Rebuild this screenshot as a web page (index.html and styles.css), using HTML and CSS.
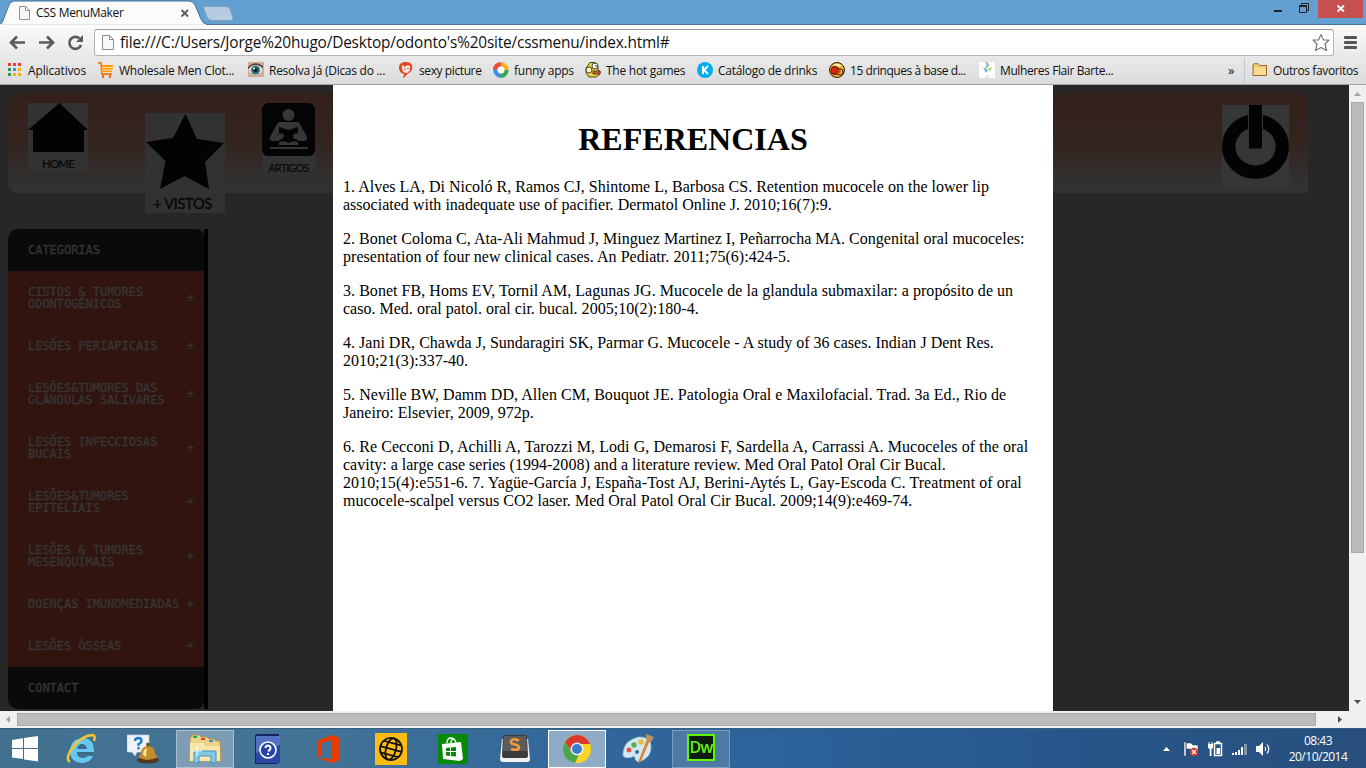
FILE: index.html
```html
<!DOCTYPE html>
<html lang="pt-BR">
<head>
<meta charset="utf-8">
<title>CSS MenuMaker</title>
<link rel="stylesheet" href="styles.css">
</head>
<body>
<div class="screen">
  <div class="titlebar">
    <svg class="tabs" width="240" height="25" viewBox="0 0 240 25">
      <path d="M0 24.500C3 23 3 20 5 15L9 5Q10.500 1 14 1H189Q193 1 195 5L201 19Q203 24 207 24.500V25H0Z" fill="#fbfbfb" stroke="#456f97"/>
      <path d="M0 25V24.300H206V25Z" fill="#fbfbfb"/>
      <path d="M204 6.500H225Q229 6.500 230 9L233 18Q234 20.500 231 20.500H212Q208 20.500 207 17L203.500 8Q203 6.500 204 6.500Z" fill="#b6cce0" stroke="#7f9fba"/>
      <path d="M19.500 6.500H26L29.500 10V19.500H19.500ZM25.500 6.500V10.500H29.500" fill="#f7f7f7" stroke="#929292"/>
      <path d="M181.500 10L188 16.500M188 10L181.500 16.500" stroke="#5b5b5b" stroke-width="1.800"/>
    </svg>
    <span class="tab-title">CSS MenuMaker</span>
    <svg class="wincontrols" width="96" height="19" viewBox="0 0 96 19">
      <rect x="4" y="11" width="8" height="2" fill="#222"/>
      <path d="M29.500 6.500H36.500V13.500H29.500ZM29 7.500H37M31.500 6V4.500H38.500V11.500H37" fill="none" stroke="#222"/>
      <rect x="48" width="45" height="19" fill="#c75050"/>
      <path d="M67.500 6.500L74 12.500M74 6.500L67.500 12.500" stroke="#fff" stroke-width="1.900"/>
    </svg>
  </div>

  <div class="toolbar">
    <svg class="nav" width="94" height="33" viewBox="0 0 94 33" fill="none" stroke="#5a5a5a" stroke-width="2.600">
      <path d="M25 17.500H12M17 11.500L11 17.500L17 23.500"/>
      <path d="M39 17.500H52M47 11.500L53 17.500L47 23.500"/>
      <path d="M79.500 13.500A6 6 0 1 0 81 20"/><path d="M83 10V17H76Z" fill="#5a5a5a" stroke="none"/>
    </svg>
    <div class="omnibox">
      <svg width="14" height="17" viewBox="0 0 14 17"><path d="M1.500 1.500H8.500L12.500 5.500V15.500H1.500ZM8.500 1.500V5.500H12.500" fill="#f8f8f8" stroke="#8c8c8c"/></svg>
      <span class="url">file:///C:/Users/Jorge%20hugo/Desktop/odonto's%20site/cssmenu/index.html#</span>
      <svg width="20" height="20" viewBox="0 0 20 20"><path d="M10 1.500L12.500 7H18L14 11L15.500 17.500L10 14.500L4.500 17.500L6 11L2 7H7.500Z" fill="#fff" stroke="#777" stroke-width="1.200" stroke-linejoin="round"/></svg>
    </div>
    <div class="burger"><i></i><i></i><i></i></div>
  </div>

  <div class="bookmarks">
    <div class="bm b0"><svg width="14" height="14" viewBox="0 0 14 14"><g fill="#e33d35"><path d="M0 0h3v3H0zM5 0h3v3H5zM10 0h3v3h-3z"/></g><path d="M0 5h3v3H0zM0 10h3v3H0z" fill="#2b9a58"/><path d="M5 5h3v3H5z" fill="#4587ed"/><path d="M10 5h3v3h-3zM5 10h3v3H5zM10 10h3v3h-3z" fill="#f5b400"/></svg><span>Aplicativos</span></div>
    <div class="bm b1"><svg width="16" height="16" viewBox="0 0 16 16"><path d="M0 1H3L4 12H14" fill="none" stroke="#f58220" stroke-width="1.800"/><path d="M4 3H15L14 10H4Z" fill="#f90"/><path d="M4 5.500H15M4 8H14" stroke="#ffe0a0"/><path d="M4 13H6V16H4ZM11 13H13V16H11Z" fill="#f26a10"/></svg><span>Wholesale Men Clot...</span></div>
    <div class="bm b2"><svg width="16" height="16" viewBox="0 0 16 16"><rect width="16" height="15" fill="#cfac94"/><path d="M0 5Q7-2 15 4V6Q8 0 0 7Z" fill="#543c30"/><ellipse cx="7.500" cy="8" rx="6.500" ry="5" fill="#dce7e6"/><circle cx="7.500" cy="8" r="4.500" fill="#34737b"/><circle cx="7.500" cy="8" r="2.300" fill="#10262b"/><circle cx="6" cy="6.500" r="1" fill="#fff"/></svg><span>Resolva Já (Dicas do ...</span></div>
    <div class="bm b3"><svg width="14" height="16" viewBox="0 0 14 16"><path d="M7 0C12 0 14 3 13 7C12 11 8 11 6 15L4 16L5 12C1 11 0 8 0 5C0 2 3 0 7 0Z" fill="#e34720"/><path d="M3 3L6 5Q8 2 11 4Q12 9 8 11Q3 11 3 6Z" fill="#f9e8e2"/><circle cx="6" cy="7" r=".8" fill="#d34424"/><circle cx="9" cy="6.500" r=".8" fill="#d34424"/></svg><span>sexy picture</span></div>
    <div class="bm b4"><svg width="16" height="16" viewBox="0 0 16 16" fill="none" stroke-width="4.500"><path d="M2 8A5.500 5.500 0 0 1 8 2.500" stroke="#e64d3d"/><path d="M8 2.500A5.500 5.500 0 0 1 13.500 8" stroke="#f2b31c"/><path d="M13.500 8A5.500 5.500 0 0 1 7 13.500" stroke="#36a853"/><path d="M7.500 13.500A5.500 5.500 0 0 1 2.500 7.500" stroke="#4788e8"/><circle cx="8" cy="8" r="3.500" fill="#fff"/></svg><span>funny apps</span></div>
    <div class="bm b5"><svg width="16" height="16" viewBox="0 0 16 16"><path d="M5 .5H10L13 4V8L15 9V12L11 15H4L1 11V6Z" fill="#e9d438" stroke="#4d452f"/><circle cx="4" cy="8" r="3" fill="#fbf4bd" stroke="#4d452f"/><circle cx="10" cy="4" r="3" fill="#fff" stroke="#4d452f"/><path d="M8 9H15V12H8Z" fill="#dc5037" stroke="#4d452f"/><path d="M11 3v2" stroke="#222"/></svg><span>The hot games</span></div>
    <div class="bm b6"><svg width="16" height="16" viewBox="0 0 16 16"><circle cx="8" cy="8" r="8" fill="#00aeef"/><path d="M6 4V12M11 4L7 8L11 12" stroke="#fff" stroke-width="2" fill="none"/></svg><span>Catálogo de drinks</span></div>
    <div class="bm b7"><svg width="16" height="16" viewBox="0 0 16 16"><circle cx="8" cy="8" r="7.500" fill="#f2ad20" stroke="#30200f"/><path d="M4 3Q9 0 13 4L9 5Z" fill="#fff3ab"/><circle cx="6" cy="8.500" r="4" fill="#df2415" stroke="#501008"/><circle cx="11" cy="10" r="3" fill="#f5c32c" stroke="#30200f"/><path d="M9 9l2-1 1 2-2 2z" fill="#e02818"/></svg><span>15 drinques à base d...</span></div>
    <div class="bm b8"><svg width="16" height="16" viewBox="0 0 16 16"><rect width="16" height="16" fill="#fff"/><path d="M7 0L9 3L7 6" stroke="#8bb7af" stroke-width="2" fill="none"/><path d="M4 5L9 8L7 11Z" fill="#64b6ca"/><path d="M9 7L13 5L11 9Z" fill="#a6bd3e"/><path d="M7 13h3v3H6z" fill="#f9e3e5"/></svg><span>Mulheres Flair Barte...</span></div>
    <div class="more">»</div>
    <div class="bm others"><svg width="16" height="14" viewBox="0 0 16 14"><path d="M1 12V2L2 .7H6L7.500 2.500H14.500V12.500H1Z" fill="#f4c96f" stroke="#9a6a33"/><path d="M2 4.500H14V12H2Z" fill="#fbd98e"/></svg><span>Outros favoritos</span></div>
  </div>

  <div class="browser">
    <div class="page">
      <div class="left">
        <div class="banner">
          <div class="pic home"><svg width="60" height="68" viewBox="0 0 60 68"><path d="M31.500 0L60 27H56V49H5V27H0Z" fill="#030303"/></svg><b>HOME</b></div>
          <div class="pic star"><svg width="80" height="100" viewBox="0 0 80 100"><path d="M40.500 1L52 26L79 30L60 49L64 76L39.500 63L15 76L20.500 48L1 29L28 25Z" fill="#030303"/></svg><b>+ VISTOS</b></div>
          <div class="pic artigos"><svg width="53" height="69" viewBox="0 0 53 69"><rect width="53" height="53" rx="6" fill="#040404"/><g fill="#363636"><circle cx="26.500" cy="12" r="6"/><path d="M18 19H35Q37 19 38 21L45 34Q46 38 42 38H36V42H17V38H11Q7 38 8 34L15 21Q16 19 18 19Z"/><path d="M8 44H46V46H8Z"/></g><path d="M17 24L26.500 27L36 24V30Q31 30 31 33Q31 36 36 37V39Q31 37 26.500 40Q22 37 17 39V37Q22 36 22 33Q22 30 17 30Z" fill="#040404"/><path d="M15 31.500h4" stroke="#28113a"/></svg><b>ARTIGOS</b></div>
        </div>
        <ul class="menu">
          <li class="dark">CATEGORIAS</li>
          <li class="tall"><span>CISTOS &amp; TUMORES<br>ODONTOGÊNICOS</span><i>+</i></li>
          <li><span>LESÕES PERIAPICAIS</span><i>+</i></li>
          <li class="tall"><span>LESÕES&amp;TUMORES DAS<br>GLÂNDULAS SALIVARES</span><i>+</i></li>
          <li class="tall"><span>LESÕES INFECCIOSAS<br>BUCAIS</span><i>+</i></li>
          <li class="tall"><span>LESÕES&amp;TUMORES<br>EPITELIAIS</span><i>+</i></li>
          <li class="tall"><span>LESÕES &amp; TUMORES<br>MESENQUIMAIS</span><i>+</i></li>
          <li><span>DOENÇAS IMUNOMEDIADAS</span><i>+</i></li>
          <li><span>LESÕES ÓSSEAS</span><i>+</i></li>
          <li class="dark last">CONTACT</li>
        </ul>
      </div>
      <div class="modal">
        <h1>REFERENCIAS</h1>
        <p>1. Alves LA, Di Nicoló R, Ramos CJ, Shintome L, Barbosa CS. Retention mucocele on the lower lip<br>associated with inadequate use of pacifier. Dermatol Online J. 2010;16(7):9.</p>
        <p>2. Bonet Coloma C, Ata-Ali Mahmud J, Minguez Martinez I, Peñarrocha MA. Congenital oral mucoceles:<br><span class="loose">presentation of four new clinical cases. An Pediatr. 2011;75(6):424-5.</span></p>
        <p><span class="wide">3. Bonet FB, Homs EV, Tornil AM, Lagunas JG. Mucocele de la glandula submaxilar: a propósito de un</span><br>caso. Med. oral patol. oral cir. bucal. 2005;10(2):180-4.</p>
        <p>4. Jani DR, Chawda J, Sundaragiri SK, Parmar G. Mucocele - A study of 36 cases. Indian J Dent Res.<br>2010;21(3):337-40.</p>
        <p><span class="wide">5. Neville BW, Damm DD, Allen CM, Bouquot JE. Patologia Oral e Maxilofacial. Trad. 3a Ed., Rio de</span><br>Janeiro: Elsevier, 2009, 972p.</p>
        <p><span class="wider">6. Re Cecconi D, Achilli A, Tarozzi M, Lodi G, Demarosi F, Sardella A, Carrassi A. Mucoceles of the oral</span><br>cavity: a large case series (1994-2008) and a literature review. Med Oral Patol Oral Cir Bucal.<br><span class="wider">2010;15(4):e551-6. 7. Yagüe-García J, España-Tost AJ, Berini-Aytés L, Gay-Escoda C. Treatment of oral</span><br>mucocele-scalpel versus CO2 laser. Med Oral Patol Oral Cir Bucal. 2009;14(9):e469-74.</p>
      </div>
      <div class="right">
        <div class="banner end">
          <svg width="67" height="82" viewBox="0 0 67 82"><rect width="67" height="82" fill="#363636"/><ellipse cx="33.500" cy="41.500" rx="26.800" ry="25.700" fill="none" stroke="#030303" stroke-width="13.300"/><path d="M26 0H41V43H26Z" fill="#363636"/><path d="M27 0H40V43.500H27Z" fill="#030303"/><path d="M16 31.500h3" stroke="#28113a"/></svg>
        </div>
      </div>
    </div>
    <div class="vscroll"><svg width="17" height="17" viewBox="0 0 17 17"><path d="M5 11H12L8.500 7Z" fill="#a3a3a3"/></svg><div class="vthumb"></div><svg class="down" width="17" height="17" viewBox="0 0 17 17"><path d="M5 6H12L8.500 10Z" fill="#505050"/></svg></div>
  </div>
  <div class="hscroll"><svg width="17" height="17" viewBox="0 0 17 17"><path d="M10 5V12L6 8.500Z" fill="#a3a3a3"/></svg><div class="hthumb"></div><svg class="rt" width="17" height="17" viewBox="0 0 17 17"><path d="M6 5V12L10 8.500Z" fill="#505050"/></svg></div>

  <div class="taskbar">
    <div class="start"><svg width="27" height="26" viewBox="0 0 27 26" fill="#fff"><path d="M0 4L11 2.300V12H0ZM12 2L26 0V12H12ZM0 13H11V23L0 21.500ZM12 13H26V25.500L12 23.500Z"/></svg></div>
    <div class="task"><svg width="32" height="32" viewBox="0 0 32 32"><path d="M28 21H12Q13 25 18 25Q21 25 23 23H28Q25 30 17 30Q5 29 5 18Q6 6 17 5Q29 5 29 18V21Z" fill="#66c8f3"/><path d="M12 16H22Q21 11 17 11Q13 11 12 16ZM12 19H29V21H12Z" fill="#39698d"/><path d="M5 29C-3 25 13 3 27 2Q31 2 29 8" fill="none" stroke="#f4c62c" stroke-width="2.500"/></svg></div>
    <div class="task"><svg width="32" height="32" viewBox="0 0 32 32"><path d="M0 2H22V19H10L8 23L5 19H0Z" fill="#eef3f8" stroke="#c0ccd6" stroke-width=".7"/><path d="M8 8Q8 5 11.500 5Q14.500 5 14.500 8Q14.500 10 11.500 11V13M11.500 14V16.500" fill="none" stroke="#1c7cc9" stroke-width="2.300"/><ellipse cx="21" cy="27" rx="11" ry="3.500" fill="#51351c"/><path d="M11 24Q14 23 14 18Q16 13 21 13Q27 13 28 19Q28 23 31 24Q20 30 11 24Z" fill="#c58c2b"/><path d="M16 22Q16 16 20 15L19 24Z" fill="#ffe389"/><circle cx="21" cy="11.500" r="2" fill="#72502a"/></svg></div>
    <div class="task open"><svg width="34" height="32" viewBox="0 0 34 32"><path d="M2 6L4 2H11L13 4H19L21 6H26L28 8H32L33 28H1Z" fill="#ecd28b" stroke="#b7964b"/><path d="M2 10H15L18 13H32V28H2Z" fill="#f8e7a9"/><path d="M5 3h4v2H5z" fill="#26ac45"/><path d="M13 5h4v2h-4z" fill="#d3452d"/><path d="M21 7h4v2h-4z" fill="#378fcc"/><path d="M6 30V18H28V30H23V23H11V30Z" fill="#82c9e8" stroke="#4791bb"/><path d="M4 18H14M9 13V23" stroke="#fff"/></svg></div>
    <div class="task"><svg width="28" height="32" viewBox="0 0 28 32"><path d="M2 2L5 1H26V30L23 31H2Z" fill="#182266"/><path d="M3 3H27V30H3Z" fill="#2c46a4"/><path d="M3 3H27V12L3 20Z" fill="#5470c3"/><circle cx="15" cy="17" r="8" fill="#2444a6" stroke="#fff" stroke-width="1.600"/><path d="M12.500 15Q12.500 12.500 15 12.500Q17.500 13 17.500 15Q17.500 17 15 18M15 20V22" fill="none" stroke="#fff" stroke-width="2"/></svg></div>
    <div class="task"><svg width="24" height="30" viewBox="0 0 24 30"><path d="M0 7L15 1L23 4V26L15 29L0 24L15 25V6L5 9V21L0 24Z" fill="#eb3c00"/></svg></div>
    <div class="task"><svg width="32" height="32" viewBox="0 0 32 32"><rect width="32" height="32" fill="#fdbc13"/><g fill="none" stroke="#111" stroke-width="1.800" transform="rotate(15 16 16)"><circle cx="16" cy="16" r="11"/><ellipse cx="16" cy="16" rx="5" ry="11"/><path d="M5 16H27M7.500 10H24.500M7.500 22H24.500"/></g></svg></div>
    <div class="task"><svg width="30" height="30" viewBox="0 0 30 30"><rect width="30" height="30" fill="#078a07"/><path d="M4 10L23 8L25 25L22 27L5 25Z" fill="#fff"/><path d="M9 9Q9 4 13 4Q17 4 18 9M13 9Q13 5 16 5" fill="none" stroke="#fff" stroke-width="1.400"/><path d="M8 14L12 13.500V17H8ZM13 13.400L18 13V17H13ZM8 18H12V22L8 21.500ZM13 18H18V22.500L13 22Z" fill="#078a07"/></svg></div>
    <div class="task"><svg width="32" height="30" viewBox="0 0 32 30"><path d="M3 5H29L31 25Q31 28 28 28H4Q1 28 1 25Z" fill="#f0f0f0"/><path d="M6 1H26Q28 1 28 3L29 21Q29 24 27 24H5Q3 24 3 21L4 3Q4 1 6 1Z" fill="#3c3c3c"/><path d="M5 2H27L28 17H4Z" fill="#5c5c5c"/><path d="M20 6.500Q12 3.500 12 8Q12 10 16 10.500Q20 11 20 14Q19 17 12 15" fill="none" stroke="#f69a3e" stroke-width="2.500"/></svg></div>
    <div class="task active"><svg width="30" height="30" viewBox="0 0 30 30"><circle cx="15" cy="15" r="14" fill="#e8bd24"/><path d="M3 8Q9 0 18 1.300Q25 3 28 10H15L10 18Z" fill="#d93a2d"/><path d="M3 8L10 19L17 20L13 29Q2 27 1 16Q1 12 3 8Z" fill="#4aa64c"/><path d="M28 10Q31 18 25 25Q20 30 13 29L20 17V10Z" fill="#fbd526"/><circle cx="15" cy="15" r="6.500" fill="#f3f3f3"/><circle cx="15" cy="15" r="5" fill="#3a7dd0"/></svg></div>
    <div class="task"><svg width="34" height="32" viewBox="0 0 34 32"><path d="M2 16Q4 7 17 4Q29 4 29 14Q29 24 19 28Q14 30 13 25Q13 22 10 24Q2 26 1 22Q1 20 2 16Z" fill="#d2e9f3" stroke="#a0c2d4"/><circle cx="7" cy="17" r="2.500" fill="#d85747"/><circle cx="12" cy="12" r="2.700" fill="#5dac54"/><circle cx="19" cy="9" r="2.800" fill="#e9ba3f"/><circle cx="15" cy="19" r="2" fill="#326f9a"/><path d="M28 7L19 28L16 31L17 27L25 6Z" fill="#dc812f"/><path d="M24 1L32 4L29 9L24 6Z" fill="#bf9263"/></svg></div>
    <div class="task open2"><div class="dw">Dw</div></div>
    <svg class="tray" width="110" height="20" viewBox="0 0 110 20">
      <path d="M1 12H8L4.500 8Z" fill="#fff"/>
      <g stroke="#17334f" stroke-width=".5"><path d="M22 3H24V17H22ZM24 4H29L31 6H36V12H30L28 10H24Z" fill="#fff"/></g><circle cx="32" cy="13" r="4.300" fill="#da3426"/><path d="M30 11L34 15M34 11L30 15" stroke="#fff" stroke-width="1.400"/>
      <path d="M52.500 4.500H59.500V16.500H52.500ZM54 3H58" fill="none" stroke="#fff" stroke-width="1.500"/><path d="M54.500 9H58V15H54.500ZM46 5H51V9L49.500 10V17H47.700V10L46 9ZM46.500 3H47.500V6H46.500ZM49.500 3H50.500V6H49.500Z" fill="#fff"/>
      <path d="M70 14h2v2h-2zM73 13h2v3h-2zM76 11h2v5h-2zM79 8h2v8h-2z" fill="#fff"/><path d="M82 5h3v11h-3z" fill="#8194a8"/>
      <path d="M94 7H97L101 3V17L97 13H94Z" fill="#fff"/><path d="M103 8Q104.500 10 103 12M105 5.500Q108.500 10 105 14.500" fill="none" stroke="#fff" stroke-width="1.200"/>
    </svg>
    <div class="clock">08:43<br>20/10/2014</div>
  </div>
</div>
</body>
</html>
```
FILE: styles.css
```css
* { box-sizing: border-box; }
body { margin: 0; font-family: "Open Sans", "Noto Sans", sans-serif; }
svg { display: block; flex: none; }
.screen { width: 1366px; height: 768px; overflow: hidden; display: flex; flex-direction: column; background: #fff; }

/* Window frame */
.titlebar { height: 25px; flex: none; background: #61a0d0; border-bottom: 1px solid #4a7497; display: flex; position: relative; }
.tabs { height: 25px; margin-bottom: -1px; position: relative; z-index: 1; }
.tab-title { position: absolute; z-index: 2; left: 36px; top: 4px; font-size: 12px; line-height: 18px; color: #111; white-space: nowrap; letter-spacing: -.3px; }
.wincontrols { margin-left: auto; margin-top: -1px; width: 96px; }

.toolbar { height: 33px; flex: none; display: flex; background: linear-gradient(#fbfbfb, #e8e8e8); }
.omnibox { width: 1240px; height: 27px; margin-top: 4px; border: 1px solid #b5b5b5; border-top-color: #999; border-radius: 3px; background: #fff; display: flex; align-items: center; padding: 0 2px 0 6px; }
.url { flex: 1; margin-left: 5px; font-size: 15.400px; line-height: 24px; letter-spacing: -.18px; color: #111; white-space: nowrap; }
.burger { width: 13px; margin: 11px 0 0 10px; display: flex; flex-direction: column; gap: 2px; }
.burger i { height: 3px; background: #555; border-radius: 1px; }

.bookmarks { height: 27px; flex: none; background: linear-gradient(#e8e8e8, #dcdcdc); border-bottom: 1px solid #a3a3a3; display: flex; padding-left: 8px; font-size: 12px; color: #111; white-space: nowrap; }
.bm { display: flex; align-items: center; gap: 5px; flex: none; height: 24px; }
.bm svg { width: 16px; }
.bm.b0 { width: 90px; gap: 4px; letter-spacing: -.15px; }
.b0 svg { width: 14px; margin-right: 2px; }
.b1 { width: 150px; letter-spacing: -.24px; }
.b2 { width: 150px; letter-spacing: -.27px; }
.b3 { width: 95px; letter-spacing: -.4px; }
.b4 { width: 92px; letter-spacing: -.25px; }
.b5 { width: 112px; letter-spacing: -.26px; }
.b6 { width: 132px; letter-spacing: -.28px; }
.b7 { width: 150px; letter-spacing: -.44px; }
.b8 { width: 241px; letter-spacing: -.4px; }
.more { width: 24px; padding-left: 8px; font-size: 13px; line-height: 24px; }
.others { padding-left: 7px; border-left: 1px solid #b8cad8; letter-spacing: -.37px; }

/* Page */
.browser { height: 626px; flex: none; display: flex; overflow: hidden; }
.page { width: 1349px; display: flex; background: #272727; }
.left { width: 333px; padding: 8px 0 0 8px; }
.banner { height: 100px; background: linear-gradient(#33201a, #34221f 25%, #33241f 45%, #332926 68%, #32302e 82%, #333230); border-radius: 10px 0 0 10px; display: flex; align-items: flex-start; }
.pic { position: relative; flex: none; background: #323232; color: #080808; }
.pic b { position: absolute; left: 0; right: 0; text-align: center; font: 11.500px/12px Lato, "Open Sans", sans-serif; letter-spacing: -.8px; -webkit-text-stroke: .2px #080808; white-space: nowrap; }
.home { margin: 10px 0 0 20px; height: 68px; }
.home b { top: 55px; }
.star { margin: 20px 0 0 57px; height: 100px; }
.star b { top: 83px; font-size: 14.500px; line-height: 16px; padding-right: 5px; letter-spacing: -.3px; -webkit-text-stroke: .4px #080808; }
.artigos { margin: 10px 0 0 37px; height: 69px; }
.artigos b { top: 59px; font-size: 10.500px; letter-spacing: -.6px; }
.menu { list-style: none; width: 200px; height: 480px; margin: 36px 0 0; padding: 0; border-right: 4px solid #000; font: 12px/12px "DejaVu Sans Mono", monospace; letter-spacing: -.03px; color: #363636; -webkit-text-stroke: .3px #363636; }
.menu li { height: 42px; padding: 0 10px 0 20px; background: #31140e; display: flex; align-items: center; justify-content: space-between; white-space: nowrap; }
.menu li.tall { height: 54px; }
.menu li.dark { background: #0a0a0a; border-radius: 10px 8px 0 0; }
.menu li.last { border-radius: 0 0 8px 10px; }
.menu i { font-style: normal; }
.modal { width: 720px; background: #fff; padding: 36px 10px 0; color: #000; font: 16px/18px "Liberation Serif", serif; letter-spacing: .012px; white-space: nowrap; }
.modal h1 { margin: 0 0 21px; font-size: 32px; line-height: 36px; text-align: center; }
.modal p { margin: 0 0 16px; }
.loose { letter-spacing: .03px; }
.wide { letter-spacing: .045px; }
.wider { letter-spacing: .064px; }
.right { width: 296px; padding-top: 8px; }
.banner.end { width: 255px; border-radius: 0 10px 0 0; padding: 12px 0 0 169px; }

.vscroll { width: 17px; background: #f0f0f0; display: flex; flex-direction: column; align-items: center; }
.vthumb { width: 13px; height: 451px; background: #bcbcbc; border: 1px solid #a8a8a8; }
.down { margin-top: auto; }
.hscroll { height: 17px; flex: none; background: #f0f0f0; display: flex; align-items: center; }
.hthumb { width: 1299px; height: 13px; background: #bcbcbc; border: 1px solid #a8a8a8; }
.rt { margin: 0 17px 0 auto; }

/* Taskbar */
.taskbar { height: 40px; flex: none; display: flex; align-items: center; gap: 4px; border-top: 1px solid #355f82; background: linear-gradient(90deg, #42718f 0, #437396 22%, #34699a 38%, #2b629a 58%, #27568a 78%, #284f7d); }
.start { width: 48px; padding-left: 12px; }
.task { width: 58px; height: 38px; flex: none; display: flex; align-items: center; justify-content: center; border: 1px solid transparent; }
.open { background: #7e9db5; border-color: #a9c0d0; }
.active { background: #8facc7; border: 1px solid #fff; }
.open2 { background: #4d7aa5; border-color: #7e9dbc; }
.dw { width: 28px; height: 27px; margin-bottom: 3px; border: 2px solid #61f500; background: #0c1c10; color: #65ef18; font: 600 16px/22px "Open Sans", sans-serif; text-align: center; letter-spacing: -1px; }
.tray { margin-left: auto; }
.clock { width: 80px; margin-right: 8px; margin-left: 2px; color: #fff; font-size: 12px; line-height: 16px; text-align: center; letter-spacing: -.5px; }
```
